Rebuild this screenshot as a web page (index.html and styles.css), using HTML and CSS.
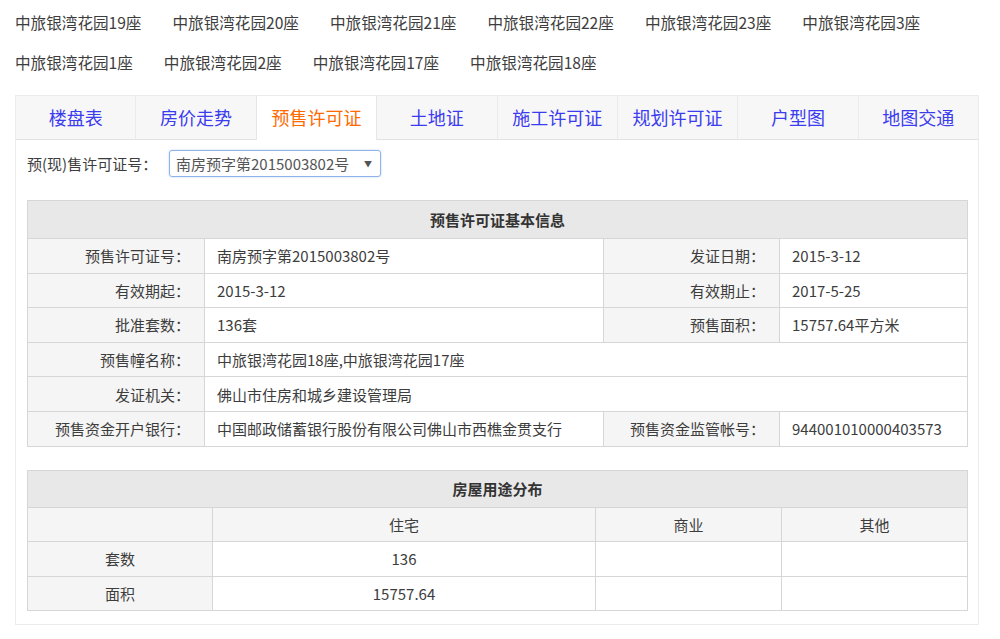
FILE: index.html
```html
<!DOCTYPE html>
<html lang="zh-CN">
<head>
<meta charset="utf-8">
<title>预售许可证</title>
<link rel="stylesheet" href="styles.css">
</head>
<body>
<div class="links">
  <div class="link-row">
    <a class="link">中旅银湾花园19座</a><a class="link">中旅银湾花园20座</a><a class="link">中旅银湾花园21座</a><a class="link">中旅银湾花园22座</a><a class="link">中旅银湾花园23座</a><a class="link">中旅银湾花园3座</a>
  </div>
  <div class="link-row">
    <a class="link">中旅银湾花园1座</a><a class="link">中旅银湾花园2座</a><a class="link">中旅银湾花园17座</a><a class="link">中旅银湾花园18座</a>
  </div>
</div>

<div class="panel">
  <div class="tabs">
    <div class="tab">楼盘表</div>
    <div class="tab">房价走势</div>
    <div class="tab active">预售许可证</div>
    <div class="tab">土地证</div>
    <div class="tab">施工许可证</div>
    <div class="tab">规划许可证</div>
    <div class="tab">户型图</div>
    <div class="tab">地图交通</div>
  </div>
  <div class="content">
    <div class="picker">
      <span class="picker-label">预(现)售许可证号：</span>
      <div class="select"><span>南房预字第2015003802号</span><span class="arrow">▼</span></div>
    </div>

    <table class="info">
      <colgroup><col class="c1"><col class="c2"><col class="c3"><col class="c4"></colgroup>
      <tr><th colspan="4" class="title">预售许可证基本信息</th></tr>
      <tr><td class="lbl">预售许可证号：</td><td class="val">南房预字第2015003802号</td><td class="lbl">发证日期：</td><td class="val">2015-3-12</td></tr>
      <tr><td class="lbl">有效期起：</td><td class="val">2015-3-12</td><td class="lbl">有效期止：</td><td class="val">2017-5-25</td></tr>
      <tr><td class="lbl">批准套数：</td><td class="val">136套</td><td class="lbl">预售面积：</td><td class="val">15757.64平方米</td></tr>
      <tr><td class="lbl">预售幢名称：</td><td class="val" colspan="3">中旅银湾花园18座,中旅银湾花园17座</td></tr>
      <tr><td class="lbl">发证机关：</td><td class="val" colspan="3">佛山市住房和城乡建设管理局</td></tr>
      <tr><td class="lbl">预售资金开户银行：</td><td class="val">中国邮政储蓄银行股份有限公司佛山市西樵金贯支行</td><td class="lbl">预售资金监管帐号：</td><td class="val">944001010000403573</td></tr>
    </table>

    <table class="usage">
      <colgroup><col class="u1"><col class="u2"><col class="u3"><col class="u4"></colgroup>
      <tr><th colspan="4" class="title">房屋用途分布</th></tr>
      <tr class="sub"><td></td><td>住宅</td><td>商业</td><td>其他</td></tr>
      <tr><td class="rowhead">套数</td><td>136</td><td></td><td></td></tr>
      <tr><td class="rowhead">面积</td><td>15757.64</td><td></td><td></td></tr>
    </table>
  </div>
</div>
</body>
</html>
```

FILE: styles.css
```css
* { box-sizing: border-box; }
html, body { margin: 0; padding: 0; background: #fff; }
body {
  font-family: "Noto Sans CJK SC", "Noto Sans", "Liberation Sans", sans-serif;
  color: #3d3d3d;
  width: 1000px;
}

.links { padding: 2px 0 0 15px; }
.link-row { height: 40px; line-height: 40px; white-space: nowrap; }
.link {
  display: inline-block;
  font-size: 15.6px;
  color: #3d3d3d;
  margin-right: 31px;
  text-decoration: none;
}

.panel {
  margin: 13px 21px 0 15px;
  border: 1px solid #ececec;
  height: 530px;
}
.tabs {
  display: flex;
  height: 44px;
  background: #f7f7f7;
  border-bottom: 1px solid #e2e2e2;
}
.tab {
  flex: 1;
  text-align: center;
  font-size: 18px;
  line-height: 43px;
  color: #3b3bef;
  border-right: 1px solid #ebebeb;
}
.tab:last-child { border-right: none; }
.tab.active {
  background: #fff;
  color: #ff6a00;
  height: 44px;
  position: relative;
  border-left: 1px solid #e6e6e6;
  border-right: 1px solid #e6e6e6;
  margin-left: -1px;
}

.content { padding: 10px 11px 0 11px; }

.picker {
  display: flex;
  align-items: center;
  height: 27px;
  font-size: 15px;
  color: #3d3d3d;
}
.picker-label { padding-left: 0; width: 142px; }
.select {
  display: flex;
  align-items: center;
  justify-content: space-between;
  width: 212px;
  height: 27px;
  padding: 0 8px 0 6px;
  border: 1px solid #8eb3ea;
  border-radius: 3px;
  box-shadow: 0 0 2px rgba(120, 160, 230, 0.5);
  font-size: 15px;
  color: #555;
}
.arrow { font-size: 8px; color: #555; }

table {
  width: 940px;
  border-collapse: collapse;
  table-layout: fixed;
  font-size: 15px;
  color: #3d3d3d;
}
td, th { border: 1px solid #d6d6d6; padding: 0; }

.info { margin-top: 23px; }
.info .c1 { width: 177px; }
.info .c2 { width: 399px; }
.info .c3 { width: 176px; }
.info .c4 { width: 188px; }
.title {
  height: 38px;
  background: #e8e8e8;
  font-weight: bold;
  text-align: center;
  color: #333;
}
.info td { height: 34.6px; white-space: nowrap; }
.lbl { background: #f5f5f5; text-align: right; padding-right: 14px; }
.val { background: #fff; text-align: left; padding-left: 12px; }

.usage { margin-top: 23px; }
.usage .u1 { width: 185px; }
.usage .u2 { width: 383px; }
.usage .u3 { width: 186px; }
.usage .u4 { width: 186px; }
.usage .title { height: 37px; }
.usage td { height: 34.5px; text-align: center; background: #fff; }
.usage .sub td { background: #f5f5f5; }
.usage .rowhead { background: #f5f5f5; }
```
